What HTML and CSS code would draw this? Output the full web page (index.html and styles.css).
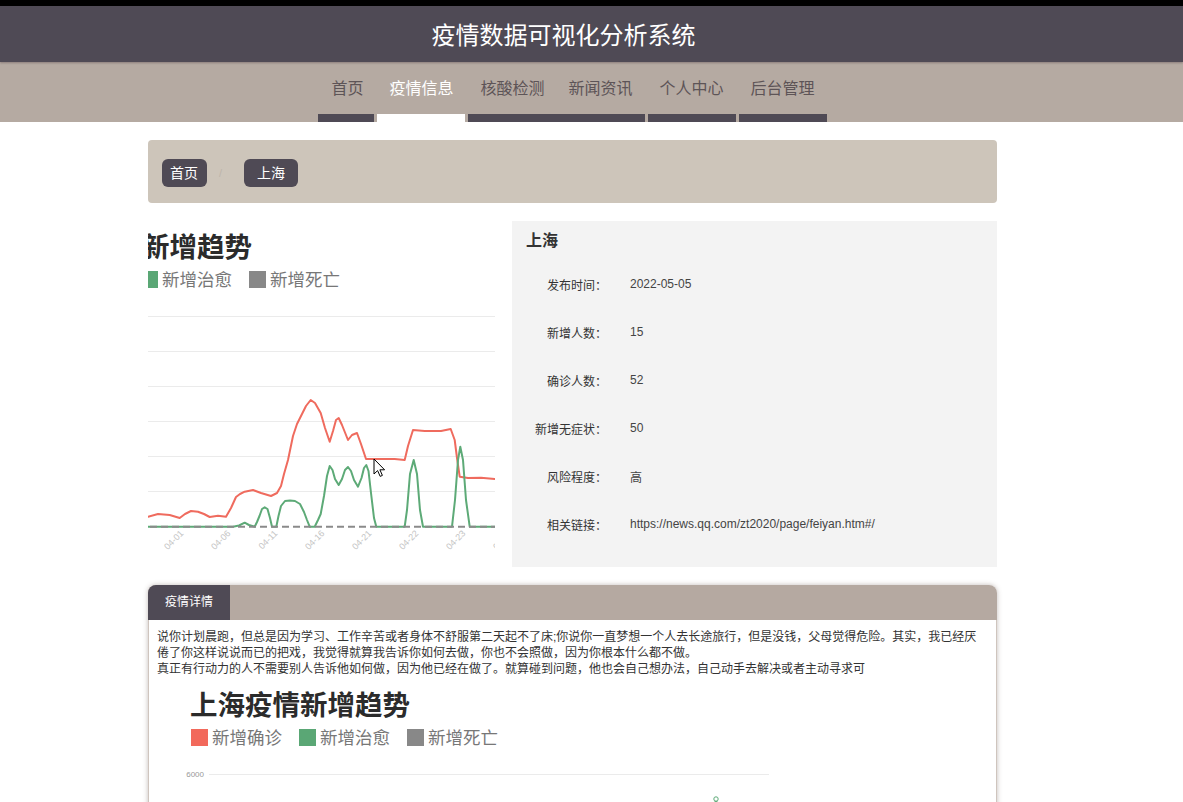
FILE: index.html
```html
<!DOCTYPE html>
<html lang="zh-CN">
<head>
<meta charset="utf-8">
<title>疫情数据可视化分析系统</title>
<link rel="stylesheet" href="styles.css">
</head>
<body>
<header class="site-header">
  <h1 class="site-title">疫情数据可视化分析系统</h1>
</header>
<nav class="site-nav">
  <ul class="nav-list">
    <li class="nav-item"><a class="nav-link" href="#">首页</a></li>
    <li class="nav-item active"><a class="nav-link" href="#">疫情信息</a></li>
    <li class="nav-item"><a class="nav-link" href="#">核酸检测</a></li>
    <li class="nav-item joined"><a class="nav-link" href="#">新闻资讯</a></li>
    <li class="nav-item"><a class="nav-link" href="#">个人中心</a></li>
    <li class="nav-item"><a class="nav-link" href="#">后台管理</a></li>
  </ul>
</nav>
<main class="page">
  <div class="container">
    <div class="breadcrumb">
      <span class="crumb">首页</span>
      <span class="crumb-sep">/</span>
      <span class="crumb crumb-current">上海</span>
    </div>

    <section class="overview">
      <div class="chart-clip">
        <div class="chart">
          <h2 class="chart-title">上海疫情新增趋势</h2>
          <div class="legend">
            <span class="legend-item"><i class="swatch swatch-red"></i>新增确诊</span>
            <span class="legend-item"><i class="swatch swatch-green"></i>新增治愈</span>
            <span class="legend-item"><i class="swatch swatch-grey"></i>新增死亡</span>
          </div>
          <svg class="chart-plot" width="640" height="279" viewBox="0 0 640 279">
            <g stroke="#ebebeb" stroke-width="1">
              <line x1="60" y1="28.5" x2="620" y2="28.5"/>
              <line x1="60" y1="63.5" x2="620" y2="63.5"/>
              <line x1="60" y1="98.5" x2="620" y2="98.5"/>
              <line x1="60" y1="133.5" x2="620" y2="133.5"/>
              <line x1="60" y1="168.5" x2="620" y2="168.5"/>
              <line x1="60" y1="203.5" x2="620" y2="203.5"/>
            </g>
            <g font-size="8" fill="#999" text-anchor="end" font-family="Liberation Sans, sans-serif">
              <text x="55" y="31">6000</text>
              <text x="55" y="66">5000</text>
              <text x="55" y="101">4000</text>
              <text x="55" y="136">3000</text>
              <text x="55" y="171">2000</text>
              <text x="55" y="206">1000</text>
              <text x="55" y="241">0</text>
            </g>
            <g font-size="9" fill="#c4c4c4" text-anchor="end" font-family="Liberation Sans, sans-serif">
              <text transform="translate(99,246) rotate(-45)">03-22</text>
              <text transform="translate(146,246) rotate(-45)">03-27</text>
              <text transform="translate(193,246) rotate(-45)">04-01</text>
              <text transform="translate(240,246) rotate(-45)">04-06</text>
              <text transform="translate(287,246) rotate(-45)">04-11</text>
              <text transform="translate(334,246) rotate(-45)">04-16</text>
              <text transform="translate(381,246) rotate(-45)">04-21</text>
              <text transform="translate(428,246) rotate(-45)">04-22</text>
              <text transform="translate(475,246) rotate(-45)">04-23</text>
              <text transform="translate(522,246) rotate(-45)">04-24</text>
              <text transform="translate(569,246) rotate(-45)">04-25</text>
              <text transform="translate(616,246) rotate(-45)">04-26</text>
            </g>
            <polyline fill="none" stroke="#ef6b5e" stroke-width="2" stroke-linejoin="round" points="60,232 72,230 84,231 96,229 108,232 120,230 132,228 144,231 157,228.7 167,226 178.7,227 188.7,230 194,226 200,223 207,223.7 213,226 218.7,229 227,227.7 235,228.7 240,220 245,209 249,206 253.7,203.7 262,202 270,205 280,208 286,205 290,198 293,186 297,172 302,148 306,136 311,126 315,118 319.7,112 324,115 329.7,125 334,140 338.7,153.7 342,143 345,132 347.7,130 351,137 357,152 361,147 366,145 370,156 375,171 383.7,171 403.7,171 413.7,172 417,158 422,142 433.7,143 450,143 459.7,141 463.7,152 466,170 468.7,188.7 477,190 490,189.7 503.7,191 515,191 530,188 545,170 560,150 575,140 590,120 605,110 620,105"/>
            <polyline fill="none" stroke="#5daa77" stroke-width="2" stroke-linejoin="round" points="60,238.7 242,238.7 248,237.5 253.7,234.7 258,237 263.7,238.7 266,234 268.5,228 271,221 273.7,219.3 276.5,221 279,230 281,238.7 285.3,238.7 287.5,228 290,218 294,213 299,212.5 304,213 309,216 313,224 316,232 318.7,238.7 323.7,238.7 327,232 329.7,226 333,208 336,188 338.7,178 341.5,182 344,191 347.7,197 351,191 354,182 357,179 360,183 363,192 367,198.7 370.5,190 373,180 375.3,177 377.5,183 380,205 383,230 385.3,238.7 413.7,238.7 416,222 419,186 422.7,172 426,186 429,222 432,238.7 461,238.7 464,212 467,172 469.3,158.7 472,172 475,212 478.7,238.7 552,238.7 555,220 559,150 563,80 567,53 571,80 575,150 579,220 582,238.7 620,238.7"/>
            <circle cx="567" cy="53" r="2.2" fill="#fff" stroke="#5daa77" stroke-width="1"/>
            <line x1="60" y1="238.7" x2="620" y2="238.7" stroke="#8a8a8a" stroke-width="2" stroke-dasharray="7 4"/>
          </svg>
        </div>
        <svg class="cursor" width="13" height="20" viewBox="0 0 13 20">
          <path d="M1 1 L1 16 L4.6 12.6 L7.2 18.4 L9.4 17.4 L6.9 11.8 L11.6 11.8 Z" fill="#fff" stroke="#000" stroke-width="1" stroke-linejoin="round"/>
        </svg>
      </div>

      <div class="info-panel">
        <h3 class="info-title">上海</h3>
        <dl class="info-list">
          <dt>发布时间：</dt><dd>2022-05-05</dd>
          <dt>新增人数：</dt><dd>15</dd>
          <dt>确诊人数：</dt><dd>52</dd>
          <dt>新增无症状：</dt><dd>50</dd>
          <dt>风险程度：</dt><dd>高</dd>
          <dt>相关链接：</dt><dd>https://news.qq.com/zt2020/page/feiyan.htm#/</dd>
        </dl>
      </div>
    </section>

    <section class="tabs">
      <div class="tab-bar">
        <span class="tab active">疫情详情</span>
      </div>
      <div class="tab-body">
        <p class="tab-text">说你计划晨跑，但总是因为学习、工作辛苦或者身体不舒服第二天起不了床;你说你一直梦想一个人去长途旅行，但是没钱，父母觉得危险。其实，我已经厌<br>倦了你这样说说而已的把戏，我觉得就算我告诉你如何去做，你也不会照做，因为你根本什么都不做。<br>真正有行动力的人不需要别人告诉他如何做，因为他已经在做了。就算碰到问题，他也会自己想办法，自己动手去解决或者主动寻求可</p>
        <div class="chart">
          <h2 class="chart-title">上海疫情新增趋势</h2>
          <div class="legend">
            <span class="legend-item"><i class="swatch swatch-red"></i>新增确诊</span>
            <span class="legend-item"><i class="swatch swatch-green"></i>新增治愈</span>
            <span class="legend-item"><i class="swatch swatch-grey"></i>新增死亡</span>
          </div>
          <svg class="chart-plot" width="640" height="279" viewBox="0 0 640 279">
            <g stroke="#ebebeb" stroke-width="1">
              <line x1="60" y1="28.5" x2="620" y2="28.5"/>
              <line x1="60" y1="63.5" x2="620" y2="63.5"/>
              <line x1="60" y1="98.5" x2="620" y2="98.5"/>
              <line x1="60" y1="133.5" x2="620" y2="133.5"/>
              <line x1="60" y1="168.5" x2="620" y2="168.5"/>
              <line x1="60" y1="203.5" x2="620" y2="203.5"/>
            </g>
            <g font-size="8" fill="#999" text-anchor="end" font-family="Liberation Sans, sans-serif">
              <text x="55" y="31">6000</text>
              <text x="55" y="66">5000</text>
              <text x="55" y="101">4000</text>
              <text x="55" y="136">3000</text>
              <text x="55" y="171">2000</text>
              <text x="55" y="206">1000</text>
              <text x="55" y="241">0</text>
            </g>
            <polyline fill="none" stroke="#ef6b5e" stroke-width="2" stroke-linejoin="round" points="60,232 72,230 84,231 96,229 108,232 120,230 132,228 144,231 157,228.7 167,226 178.7,227 188.7,230 194,226 200,223 207,223.7 213,226 218.7,229 227,227.7 235,228.7 240,220 245,209 249,206 253.7,203.7 262,202 270,205 280,208 286,205 290,198 293,186 297,172 302,148 306,136 311,126 315,118 319.7,112 324,115 329.7,125 334,140 338.7,153.7 342,143 345,132 347.7,130 351,137 357,152 361,147 366,145 370,156 375,171 383.7,171 403.7,171 413.7,172 417,158 422,142 433.7,143 450,143 459.7,141 463.7,152 466,170 468.7,188.7 477,190 490,189.7 503.7,191 515,191 530,188 545,170 560,150 575,140 590,120 605,110 620,105"/>
            <polyline fill="none" stroke="#5daa77" stroke-width="2" stroke-linejoin="round" points="60,238.7 242,238.7 248,237.5 253.7,234.7 258,237 263.7,238.7 266,234 268.5,228 271,221 273.7,219.3 276.5,221 279,230 281,238.7 285.3,238.7 287.5,228 290,218 294,213 299,212.5 304,213 309,216 313,224 316,232 318.7,238.7 323.7,238.7 327,232 329.7,226 333,208 336,188 338.7,178 341.5,182 344,191 347.7,197 351,191 354,182 357,179 360,183 363,192 367,198.7 370.5,190 373,180 375.3,177 377.5,183 380,205 383,230 385.3,238.7 413.7,238.7 416,222 419,186 422.7,172 426,186 429,222 432,238.7 461,238.7 464,212 467,172 469.3,158.7 472,172 475,212 478.7,238.7 552,238.7 555,220 559,150 563,80 567,53 571,80 575,150 579,220 582,238.7 620,238.7"/>
            <circle cx="567" cy="53" r="2.2" fill="#fff" stroke="#5daa77" stroke-width="1"/>
            <line x1="60" y1="238.7" x2="620" y2="238.7" stroke="#8a8a8a" stroke-width="2" stroke-dasharray="7 4"/>
          </svg>
        </div>
      </div>
    </section>
  </div>
</main>
</body>
</html>
```

FILE: styles.css
```css
* {
  box-sizing: border-box;
}

body {
  margin: 0;
  background: #fff;
  color: #333;
  font-family: "Liberation Sans", "Noto Sans CJK SC", sans-serif;
}

/* ---------- header ---------- */
.site-header {
  position: relative;
  z-index: 1;
  height: 62px;
  border-top: 6px solid #000;
  background: #4f4a55;
  display: flex;
  align-items: center;
  justify-content: center;
  padding-right: 56px;
  box-shadow: 0 1px 2px rgba(60, 40, 50, 0.35);
}

.site-title {
  margin: 0;
  font-size: 24px;
  line-height: 1;
  font-weight: normal;
  color: #fff;
  font-family: "Noto Sans CJK SC", sans-serif;
}

/* ---------- nav ---------- */
.site-nav {
  height: 60px;
  background: #b5aaa2;
  display: flex;
  justify-content: center;
  padding-right: 38px;
}

.nav-list {
  list-style: none;
  margin: 0;
  padding: 0;
  display: flex;
}

.nav-item {
  margin-left: 3px;
}

.nav-item:first-child,
.nav-item.joined {
  margin-left: 0;
}

.nav-link {
  display: block;
  padding: 0 12px;
  line-height: 50px;
  font-size: 16px;
  color: #5d5457;
  text-decoration: none;
  font-family: "Noto Sans CJK SC", sans-serif;
}

.nav-item:first-child .nav-link {
  padding: 0 11px 0 13px;
}

.nav-item::after {
  content: "";
  display: block;
  height: 8px;
  margin-top: 2px;
  background: #4f4a55;
}

.nav-item.active::after {
  background: #fff;
}

.nav-item.active .nav-link {
  color: #fff;
}

/* ---------- page ---------- */
.page {
  padding-right: 38px;
}

.container {
  width: 849px;
  margin: 18px auto 0;
}

/* ---------- breadcrumb ---------- */
.breadcrumb {
  height: 63px;
  padding: 19px 14px 0;
  background: #cdc5ba;
  border-radius: 4px;
  display: flex;
  align-items: flex-start;
}

.crumb {
  background: #4f4a55;
  color: #fff;
  font-size: 14px;
  line-height: 28px;
  padding: 0 9px 0 8px;
  border-radius: 6px;
}

.crumb-current {
  padding: 0 13px;
}

.crumb-sep {
  color: #bdb5ab;
  font-size: 11px;
  line-height: 28px;
  margin: 0 22px 0 12px;
}

/* ---------- overview ---------- */
.overview {
  display: flex;
  gap: 17px;
  margin-top: 18px;
}

.chart-clip {
  position: relative;
  flex: none;
  width: 347px;
  height: 346px;
  overflow: hidden;
}

.chart-clip .chart {
  margin-left: -157px;
}

.chart {
  width: 640px;
  padding-top: 10px;
}

.chart-title {
  margin: 0 0 0 41px;
  font-size: 27.5px;
  line-height: 28px;
  font-weight: bold;
  color: #2b2b2b;
  font-family: "Noto Sans CJK SC", sans-serif;
}

.legend {
  display: flex;
  gap: 17px;
  margin: 11px 0 0 42px;
}

.legend-item {
  display: flex;
  align-items: center;
  gap: 4px;
  font-size: 17.5px;
  line-height: 18px;
  color: #777;
  font-family: "Noto Sans CJK SC", sans-serif;
}

.swatch {
  display: block;
  width: 17px;
  height: 17px;
}

.swatch-red {
  background: #f2695b;
}

.swatch-green {
  background: #5aa775;
}

.swatch-grey {
  background: #888;
}

.chart-plot {
  display: block;
}

.cursor {
  position: absolute;
  left: 225px;
  top: 237px;
}

/* ---------- info panel ---------- */
.info-panel {
  flex: 1;
  height: 346px;
  background: #f3f3f3;
  padding: 9px 14px 19px;
}

.info-title {
  margin: 0 0 8px;
  font-size: 16px;
  line-height: 22px;
  font-weight: bold;
  color: #333;
}

.info-list {
  margin: 0;
  display: grid;
  grid-template-columns: 81px 1fr;
  grid-auto-rows: 48px;
  column-gap: 23px;
  align-items: center;
  font-size: 12px;
}

.info-list dt {
  text-align: right;
  color: #333;
  white-space: nowrap;
}

.info-list dd {
  margin: 0;
  color: #444;
}

/* ---------- tabs ---------- */
.tabs {
  margin-top: 18px;
  border-radius: 8px 8px 0 0;
  box-shadow: 0 0 5px rgba(80, 60, 50, 0.35);
  overflow: hidden;
}

.tab-bar {
  height: 35px;
  background: #b5a9a1;
  display: flex;
}

.tab {
  width: 82px;
  line-height: 35px;
  text-align: center;
  font-size: 12px;
  color: #fff;
  background: #4f4a55;
}

.tab-body {
  background: #fff;
  border: 1px solid #cfc5be;
  border-top: 0;
  padding-bottom: 20px;
}

.tab-text {
  margin: 0;
  padding: 9px 8px 0;
  font-size: 12px;
  line-height: 16px;
  color: #333;
  white-space: nowrap;
}

.tab-body .chart {
  margin-top: 2px;
}
```
